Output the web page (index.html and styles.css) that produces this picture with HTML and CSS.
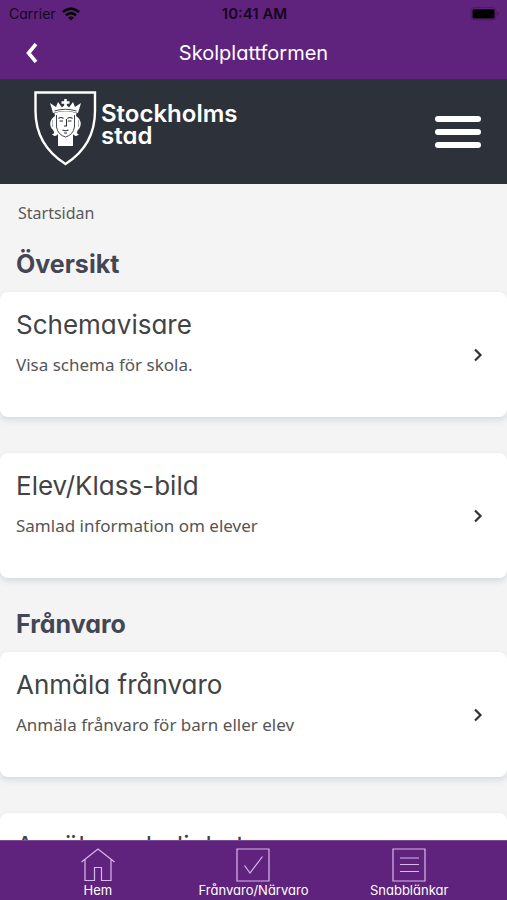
FILE: index.html
```html
<!DOCTYPE html>
<html lang="sv">
<head>
    <meta charset="UTF-8">
    <meta name="viewport" content="width=device-width, initial-scale=1.0">
    <title>Skolplattformen</title>
    <link rel="stylesheet" href="styles.css">
</head>
<body>
    <div class="app-top">
        <div class="status-bar">
            <div class="carrier">
                <span>Carrier</span>
                <svg width="18" height="14" viewBox="0 0 18 14" fill="none" stroke="#000" stroke-width="2.6">
                    <path d="M1 5.2 C5.5 0.6 12.5 0.6 17 5.2"/>
                    <path d="M4 8.3 C6.8 5.4 11.2 5.4 14 8.3"/>
                    <path d="M9 13.6 L6.1 10.7 C7.6 9.1 10.4 9.1 11.9 10.7 Z" fill="#000" stroke="none"/>
                </svg>
            </div>
            <span class="clock">10:41 AM</span>
            <svg class="battery" width="30" height="14" viewBox="0 0 30 14">
                <rect x="1" y="0.5" width="25" height="12.5" rx="3.5" fill="none" stroke="#4a1a62"/>
                <rect x="2.5" y="2.2" width="22" height="9.2" rx="1.5" fill="#000"/>
                <path d="M27.5 4.5 C29.5 5.3 29.5 8.2 27.5 9 Z" fill="#4a1a62"/>
            </svg>
        </div>
        <div class="nav-bar">
            <button class="back" type="button" aria-label="Tillbaka">
                <svg width="14" height="20" viewBox="0 0 14 20" fill="none" stroke="#fff" stroke-width="3.6">
                    <path d="M11 1 L3.5 10 L11 19"/>
                </svg>
            </button>
            <h1>Skolplattformen</h1>
        </div>
    </div>

    <header class="site-header">
        <a class="logo" href="#">
            <svg width="63" height="75" viewBox="0 0 63 75">
                <path d="M1.5 1.5 H61 V20 C61 42 52 60 31.5 73 C11 60 1.5 42 1.5 20 Z" fill="none" stroke="#fff" stroke-width="2.4"/>
                <!-- crown -->
                <path d="M16 12 L22 16 L24 11 L28 16.5 L31.5 13 L35 16.5 L39 11 L41 16 L47 12 L44 22 Q31.5 18 19 22 Z" fill="#fff"/>
                <path d="M31.5 8 V17 M27.5 11.5 H35.5" stroke="#fff" stroke-width="2.6"/>
                <path d="M20.5 20 Q31.5 16.5 42.5 20" fill="none" stroke="#2d3139" stroke-width="0.9"/>
                <!-- hair, face and neck -->
                <path d="M20.5 22 Q31.5 18.5 42.5 22 L42 25 C48 29 48 35 44 39 C42 42 43 43 45 43 C43 46 40 45 39 43 L39 55 H24 L24 43 C22 46 19 45 18 43 C20 43 21 42 19 39 C15 35 15 29 21 25 Z" fill="#fff"/>
                <path d="M22.5 24 V36 Q24 44 31.5 46 Q39 44 40.5 36 V24" fill="none" stroke="#2d3139" stroke-width="0.9"/>
                <path d="M24.5 27.5 Q27 25.5 29.5 27.5 M33.5 27.5 Q36 25.5 38.5 27.5 M25.5 30 H29 M34 30 H37.5 M32.5 28 V35 H30 M28.5 39 Q31.5 40.5 34.5 39 M30 42 H33" fill="none" stroke="#2d3139" stroke-width="1.1"/>
                <path d="M18.5 29 V36 M44.5 29 V36" stroke="#8b8e94" stroke-width="0.7"/>
            </svg>
            <span>Stockholms<br>stad</span>
        </a>
        <button class="menu" type="button" aria-label="Meny">
            <span></span>
            <span></span>
            <span></span>
        </button>
    </header>

    <main>
        <p class="breadcrumb">Startsidan</p>

        <section>
            <h2>Översikt</h2>
            <a class="card" href="#">
                <div>
                    <h3>Schemavisare</h3>
                    <p>Visa schema för skola.</p>
                </div>
                <svg width="10" height="14" viewBox="0 0 10 14"><path d="M2 1.5 L7.5 7 L2 12.5"/></svg>
            </a>
            <a class="card" href="#">
                <div>
                    <h3>Elev/Klass-bild</h3>
                    <p>Samlad information om elever</p>
                </div>
                <svg width="10" height="14" viewBox="0 0 10 14"><path d="M2 1.5 L7.5 7 L2 12.5"/></svg>
            </a>
        </section>

        <section>
            <h2>Frånvaro</h2>
            <a class="card" href="#">
                <div>
                    <h3>Anmäla frånvaro</h3>
                    <p>Anmäla frånvaro för barn eller elev</p>
                </div>
                <svg width="10" height="14" viewBox="0 0 10 14"><path d="M2 1.5 L7.5 7 L2 12.5"/></svg>
            </a>
            <a class="card" href="#">
                <div>
                    <h3>Ansök om ledighet</h3>
                </div>
            </a>
        </section>
    </main>

    <nav class="tab-bar">
        <a href="#">
            <svg width="34" height="34" viewBox="0 0 34 34">
                <path d="M0.5 14 L17 1 L33.5 14 M4 11.5 V32.5 H13.5 V19.5 H20.5 V32.5 H30 V11.5"/>
            </svg>
            <span>Hem</span>
        </a>
        <a href="#">
            <svg width="34" height="34" viewBox="0 0 34 34">
                <path d="M1 1 H33 V33 H1 Z M8.5 17.5 L14 25 L26.5 8.5"/>
            </svg>
            <span>Frånvaro/Närvaro</span>
        </a>
        <a href="#">
            <svg width="34" height="34" viewBox="0 0 34 34">
                <path d="M1 1 H33 V33 H1 Z M8 10 H27 M8 16.500 H27 M8 23.500 H27"/>
            </svg>
            <span>Snabblänkar</span>
        </a>
    </nav>
</body>
</html>
```
FILE: styles.css
```css
* {
    box-sizing: border-box;
}
body {
    margin: 0;
    height: 100vh;
    display: flex;
    flex-direction: column;
    background-color: #f4f4f4;
    color: #434343;
    font-family: Inter, "Liberation Sans", sans-serif;
    font-feature-settings: "cv11";
}
h1, h2, h3, p {
    margin: 0;
}
a {
    color: inherit;
    text-decoration: none;
}
button {
    border: none;
    padding: 0;
    background: none;
    cursor: pointer;
}
svg {
    display: block;
    flex-shrink: 0;
}

/* top bars */
.app-top {
    background-color: #5f237d;
}
.status-bar {
    display: grid;
    grid-template-columns: 1fr auto 1fr;
    align-items: center;
    height: 27px;
    padding: 0 7px 0 9px;
    color: #16051f;
    font-size: 14px;
}
.carrier {
    display: flex;
    align-items: center;
    gap: 6px;
}
.clock {
    font-size: 15px;
    font-weight: 600;
}
.battery {
    justify-self: end;
}
.nav-bar {
    display: grid;
    grid-template-columns: 40px 1fr 40px;
    align-items: center;
    height: 52px;
    padding: 0 12px;
    color: #fff;
}
.back {
    display: flex;
    justify-content: center;
}
.nav-bar h1 {
    font-size: 20px;
    font-weight: 400;
    line-height: 28px;
    text-align: center;
}
.site-header {
    display: flex;
    justify-content: space-between;
    height: 105px;
    padding: 12px 26px 0 34px;
    background-color: #2d3139;
    color: #fff;
}
.logo {
    display: flex;
    align-items: flex-start;
    gap: 4px;
    font-size: 24px;
    font-weight: 600;
    line-height: 22px;
}
.logo span {
    padding-top: 12px;
}
.menu {
    display: flex;
    flex-direction: column;
    gap: 7px;
    padding-top: 25px;
}
.menu span {
    width: 46px;
    height: 6px;
    border-radius: 3px;
    background-color: #fff;
}

/* content */
main {
    flex: 1;
    min-height: 0;
    overflow-y: auto;
    scrollbar-width: none;
}
.breadcrumb {
    padding: 17px 18px 23px;
    color: #595959;
    font-family: "Noto Sans", sans-serif;
    font-size: 16px;
    line-height: 24px;
}
section + section {
    margin-top: 30px;
}
h2 {
    padding: 0 16px;
    margin-bottom: 12px;
    color: #434655;
    font-size: 25px;
    font-weight: 700;
    line-height: 32px;
}
.card {
    display: flex;
    justify-content: space-between;
    align-items: center;
    min-height: 125px;
    padding: 0 24px 0 16px;
    border-radius: 8px;
    background-color: #fff;
    box-shadow: 0 3px 6px #d3d8e0;
}
.card + .card {
    margin-top: 36px;
}
.card div {
    align-self: flex-start;
    padding-top: 17px;
}
.card h3 {
    font-size: 26px;
    font-weight: 400;
    line-height: 32px;
}
.card p {
    margin-top: 12px;
    color: #555;
    font-family: "Noto Sans", sans-serif;
    font-size: 17px;
    line-height: 24px;
}
.card svg {
    fill: none;
    stroke: #333;
    stroke-width: 2.2;
}

/* bottom tabs */
.tab-bar {
    display: grid;
    grid-template-columns: repeat(3, 1fr);
    height: 60px;
    padding: 7px 20px 0;
    border-top: 1px solid #7d4c96;
    background-color: #5f237d;
    color: #fff;
    font-size: 13px;
    line-height: 16px;
}
.tab-bar a {
    display: flex;
    flex-direction: column;
    align-items: center;
}
.tab-bar svg {
    fill: none;
    stroke: #d9b8e8;
    stroke-width: 1.2;
}
```
